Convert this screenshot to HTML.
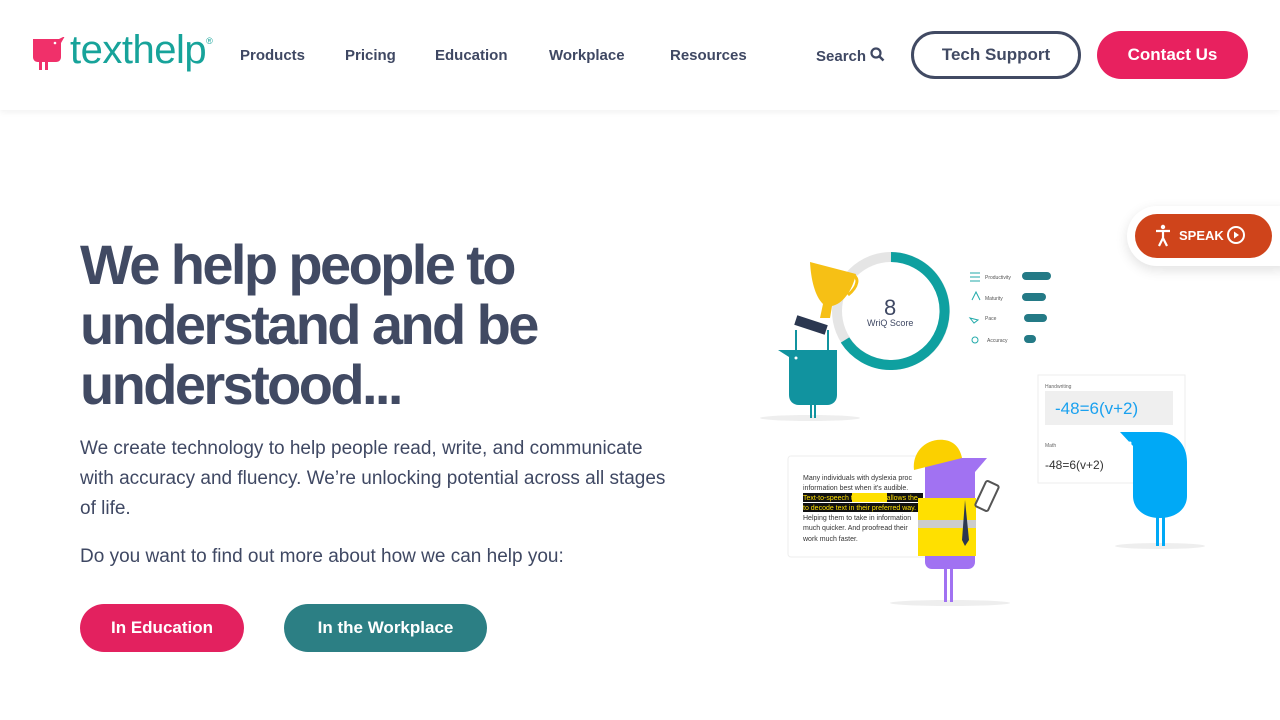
<!DOCTYPE html>
<html><head><meta charset="utf-8"><style>
*{margin:0;padding:0;box-sizing:border-box}
body{width:1280px;height:720px;overflow:hidden;background:#fff;font-family:"Liberation Sans",sans-serif;color:#3f4863;position:relative}
header{position:absolute;left:0;top:0;width:1280px;height:110px;background:#fff;box-shadow:0 2px 6px rgba(0,0,0,.06)}
.nav{position:absolute;top:47px;font-size:15px;font-weight:bold;color:#3f4863}
.btn{position:absolute;border-radius:26px;font-weight:bold;text-align:center;font-size:17px}
h1{position:absolute;left:80px;top:235px;font-size:56px;line-height:60px;font-weight:bold;letter-spacing:-2.6px;color:#414a63;width:600px}
p{position:absolute;left:80px;font-size:19px;line-height:30px;color:#3f4863;width:590px}
.abs{position:absolute}
</style></head><body>
<header>
<svg class="abs" style="left:31px;top:37px" width="36" height="34" viewBox="0 0 36 34"><path d="M2 2h26l6-3-4 7v14c0 3-2 5-5 5H7c-3 0-5-2-5-5z" fill="#f0306a"/><rect x="8" y="24" width="3" height="9" fill="#f0306a"/><rect x="14" y="24" width="3" height="9" fill="#f0306a"/><circle cx="24" cy="6" r="1.3" fill="#fff"/></svg>
<div class="abs" style="left:70px;top:28px;font-size:40px;color:#17a39a;letter-spacing:-0.5px">texthelp<sup style="font-size:9px;vertical-align:top;position:relative;top:8px">®</sup></div>
<div class="nav" style="left:240px">Products</div>
<div class="nav" style="left:345px">Pricing</div>
<div class="nav" style="left:435px">Education</div>
<div class="nav" style="left:549px">Workplace</div>
<div class="nav" style="left:670px">Resources</div>
<div class="nav" style="left:816px">Search <svg width="15" height="15" viewBox="0 0 15 15" style="vertical-align:-1px"><circle cx="6" cy="6" r="4.5" fill="none" stroke="#3f4863" stroke-width="2.2"/><path d="M9.5 9.5l4 4" stroke="#3f4863" stroke-width="2.5"/></svg></div>
<div class="btn" style="left:911px;top:31px;width:170px;height:48px;border:3px solid #414a63;line-height:42px;color:#414a63">Tech Support</div>
<div class="btn" style="left:1097px;top:31px;width:151px;height:48px;background:#e8215f;color:#fff;line-height:48px">Contact Us</div>
</header>
<h1>We help people to understand and be understood...</h1>
<p style="top:434px">We create technology to help people read, write, and communicate with accuracy and fluency. We’re unlocking potential across all stages of life.</p>
<p style="top:542px">Do you want to find out more about how we can help you:</p>
<div class="btn" style="left:80px;top:604px;width:164px;height:48px;line-height:48px;background:#e3215f;color:#fff">In Education</div>
<div class="btn" style="left:284px;top:604px;width:203px;height:48px;line-height:48px;background:#2c7f84;color:#fff">In the Workplace</div>

<div class="abs" style="left:1127px;top:206px;width:160px;height:60px;background:#fff;border-radius:30px 0 0 30px;box-shadow:0 4px 12px rgba(0,0,0,.12)"></div>
<div class="abs" style="left:1135px;top:214px;width:137px;height:44px;background:#cf441b;border-radius:22px;color:#fff;font-weight:bold;font-size:13px;line-height:44px;padding-left:44px">SPEAK</div>
<svg class="abs" style="left:1152px;top:224px" width="100" height="24" viewBox="0 0 100 24"><circle cx="11" cy="3" r="2.2" fill="#fff"/><path d="M4 7h14M11 7v7l-4 8M11 14l4 8" stroke="#fff" stroke-width="2.2" fill="none"/><circle cx="84" cy="11" r="8" fill="none" stroke="#fff" stroke-width="2"/><path d="M82 7.5v7l5-3.5z" fill="#fff"/></svg>

<svg class="abs" style="left:740px;top:240px" width="480" height="380" viewBox="740 240 480 380">
<circle cx="891" cy="311" r="54" fill="none" stroke="#e5e5e5" stroke-width="10"/>
<path d="M891 257A54 54 0 1 1 845 340" fill="none" stroke="#0fa0a0" stroke-width="10"/>
<text x="884" y="315" font-size="22" fill="#3f4863" font-family="Liberation Sans">8</text>
<text x="867" y="326" font-size="9" fill="#3f4863" font-family="Liberation Sans">WriQ Score</text>
<g font-size="5" fill="#555" font-family="Liberation Sans">
<text x="985" y="279">Productivity</text><text x="985" y="300">Maturity</text><text x="985" y="320">Pace</text><text x="987" y="342">Accuracy</text></g>
<g fill="#247a86"><rect x="1022" y="272" width="29" height="8" rx="4"/><rect x="1022" y="293" width="24" height="8" rx="4"/><rect x="1024" y="314" width="23" height="8" rx="4"/><rect x="1024" y="335" width="12" height="8" rx="4"/></g>
<g fill="none" stroke="#2aa" stroke-width="1"><path d="M970 273h10M970 277h10M970 281h10"/><path d="M972 300l4-8 4 8"/><path d="M970 318l8 2-4 3z"/><circle cx="975" cy="340" r="3"/></g>
<ellipse cx="810" cy="418" rx="50" ry="3" fill="#eee"/>
<path d="M810 262l46 12c-4 18-14 30-24 32l-2 12h-10l3-14c-8-8-12-24-13-42z" fill="#f6c015"/><path d="M852 275c8 2 6 12-4 20" fill="none" stroke="#f6c015" stroke-width="3"/>
<rect x="795" y="320" width="32" height="10" fill="#2b3750" transform="rotate(18 811 325)"/>
<path d="M778 350h59v45c0 6-4 10-10 10h-28c-6 0-10-4-10-10v-38z" fill="#11939f"/><path d="M796 330v22M828 330v22" stroke="#11939f" stroke-width="2"/>
<circle cx="796" cy="358" r="1.5" fill="#fff"/>
<rect x="810" y="405" width="2" height="13" fill="#11939f"/><rect x="814" y="405" width="2" height="13" fill="#11939f"/>
<rect x="1038" y="375" width="147" height="108" fill="#fff" stroke="#eee"/>
<text x="1045" y="388" font-size="5" fill="#666">Handwriting</text>
<rect x="1045" y="391" width="128" height="34" fill="#efefef"/>
<text x="1055" y="414" font-size="17" fill="#1aa1ef" font-family="Liberation Sans">-48=6(v+2)</text>
<text x="1045" y="447" font-size="5" fill="#666">Math</text>
<text x="1045" y="469" font-size="12" fill="#333" font-family="Liberation Sans">-48=6(v+2)</text>
<ellipse cx="1160" cy="546" rx="45" ry="3" fill="#eee"/>
<path d="M1120 432h38c17 0 29 12 29 30v34c0 12-10 22-27 22s-27-10-27-22v-50z" fill="#00a9f6"/>
<circle cx="1130" cy="443" r="1.5" fill="#fff"/>
<rect x="1156" y="516" width="3" height="30" fill="#00a9f6"/><rect x="1162" y="516" width="3" height="30" fill="#00a9f6"/>
<rect x="788" y="456" width="150" height="101" fill="#fff" stroke="#eee" rx="3"/>
<g font-size="7" fill="#333" font-family="Liberation Sans"><text x="803" y="480">Many individuals with dyslexia proc</text><text x="803" y="490">information best when it's audible.</text>
<rect x="803" y="493" width="120" height="9" fill="#111"/><rect x="852" y="493" width="35" height="9" fill="#ffe000"/><text x="803" y="500" fill="#ffe000">Text-to-speech technology allows the</text>
<rect x="803" y="503" width="120" height="9" fill="#111"/><text x="803" y="510" fill="#ffe000">to decode text in their preferred way.</text>
<text x="803" y="520">Helping them to take in information</text><text x="803" y="530">much quicker. And proofread their</text><text x="803" y="541">work much faster.</text></g>
<ellipse cx="950" cy="603" rx="60" ry="3" fill="#eee"/>
<path d="M925 458h62l-12 14v90c0 4-3 7-7 7h-36c-4 0-7-3-7-7z" fill="#a172f2"/>
<path d="M914 470c-2-18 12-32 30-30 10 1 16 8 18 18z" fill="#fbd000"/>
<rect x="918" y="498" width="58" height="58" fill="#ffe000"/><rect x="918" y="520" width="58" height="8" fill="#ccc"/><path d="M965 500l4 40-4 6-3-6z" fill="#2b3750"/>
<rect x="980" y="482" width="14" height="28" rx="2" fill="#fff" stroke="#555" stroke-width="2" transform="rotate(25 987 496)"/>
<rect x="944" y="569" width="3" height="33" fill="#a172f2"/><rect x="950" y="569" width="3" height="33" fill="#a172f2"/>
</svg>
</body></html>
